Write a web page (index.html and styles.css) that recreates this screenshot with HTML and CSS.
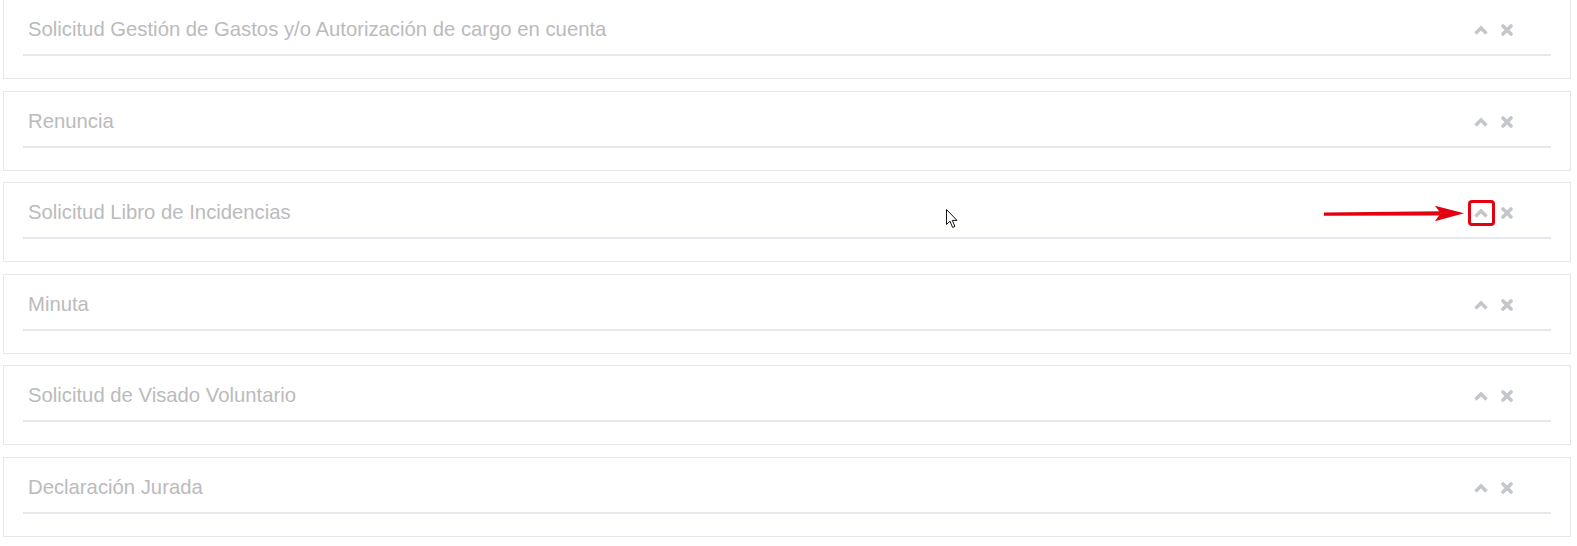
FILE: index.html
```html
<!DOCTYPE html>
<html lang="es">
<head>
<meta charset="utf-8">
<title>Solicitudes</title>
<link rel="stylesheet" href="styles.css">
</head>
<body>
<div class="list">
  <section class="box">
    <div class="box-header">
      <h3 class="box-title">Solicitud Gestión de Gastos y/o Autorización de cargo en cuenta</h3>
      <div class="box-tools">
        <span class="tool"><svg class="ic-up" viewBox="0 0 14 10"><polyline points="1.5,8.5 7,3 12.5,8.5"/></svg></span>
        <span class="tool"><svg class="ic-x" viewBox="0 0 12 12"><path d="M2 2 L10 10 M10 2 L2 10"/></svg></span>
      </div>
    </div>
  </section>
  <section class="box">
    <div class="box-header">
      <h3 class="box-title">Renuncia</h3>
      <div class="box-tools">
        <span class="tool"><svg class="ic-up" viewBox="0 0 14 10"><polyline points="1.5,8.5 7,3 12.5,8.5"/></svg></span>
        <span class="tool"><svg class="ic-x" viewBox="0 0 12 12"><path d="M2 2 L10 10 M10 2 L2 10"/></svg></span>
      </div>
    </div>
  </section>
  <section class="box has-cursor">
    <div class="box-header">
      <h3 class="box-title">Solicitud Libro de Incidencias</h3>
      <div class="box-tools">
        <span class="tool annotated">
          <svg class="ic-up" viewBox="0 0 14 10"><polyline points="1.5,8.5 7,3 12.5,8.5"/></svg>
          <span class="mark-box"></span>
          <svg class="mark-arrow" viewBox="0 0 150 20"><path d="M4 7.4 L124 6.2 L124 10.4 L4 10.8 Z" fill="#e3000f"/><path d="M118 0.5 L148 8.2 L118 16.5 L124 8.3 Z" fill="#e3000f"/></svg>
        </span>
        <span class="tool"><svg class="ic-x" viewBox="0 0 12 12"><path d="M2 2 L10 10 M10 2 L2 10"/></svg></span>
      </div>
    </div>
    <svg class="cursor" viewBox="0 0 14 20"><path d="M0.5 0.5 L0.5 15.5 L4 12.2 L6.6 18.4 L8.9 17.4 L6.3 11.4 L11 11.4 Z" fill="#fff" stroke="#111" stroke-width="1" stroke-linejoin="miter"/></svg>
  </section>
  <section class="box">
    <div class="box-header">
      <h3 class="box-title">Minuta</h3>
      <div class="box-tools">
        <span class="tool"><svg class="ic-up" viewBox="0 0 14 10"><polyline points="1.5,8.5 7,3 12.5,8.5"/></svg></span>
        <span class="tool"><svg class="ic-x" viewBox="0 0 12 12"><path d="M2 2 L10 10 M10 2 L2 10"/></svg></span>
      </div>
    </div>
  </section>
  <section class="box">
    <div class="box-header">
      <h3 class="box-title">Solicitud de Visado Voluntario</h3>
      <div class="box-tools">
        <span class="tool"><svg class="ic-up" viewBox="0 0 14 10"><polyline points="1.5,8.5 7,3 12.5,8.5"/></svg></span>
        <span class="tool"><svg class="ic-x" viewBox="0 0 12 12"><path d="M2 2 L10 10 M10 2 L2 10"/></svg></span>
      </div>
    </div>
  </section>
  <section class="box">
    <div class="box-header">
      <h3 class="box-title">Declaración Jurada</h3>
      <div class="box-tools">
        <span class="tool"><svg class="ic-up" viewBox="0 0 14 10"><polyline points="1.5,8.5 7,3 12.5,8.5"/></svg></span>
        <span class="tool"><svg class="ic-x" viewBox="0 0 12 12"><path d="M2 2 L10 10 M10 2 L2 10"/></svg></span>
      </div>
    </div>
  </section>
</div>
</body>
</html>
```

FILE: styles.css
```css
html, body {
  margin: 0;
  padding: 0;
  background: #ffffff;
  overflow: hidden;
}

body {
  font-family: "Liberation Sans", Arial, sans-serif;
}

.list {
  display: flex;
  flex-direction: column;
  gap: 11.6px;
  padding: 0 6px 0 3px;
  margin-top: -1px;
}

.box {
  position: relative;
  height: 80px;
  box-sizing: border-box;
  border: 1px solid #e6e7ea;
  background: #fff;
  padding: 18px 19px 0 19px;
}

.box-header {
  display: flex;
  align-items: center;
  height: 36px;
  box-sizing: content-box;
  border-bottom: 2px solid #e5e8ec;
  padding-right: 38px;
}

.box-title {
  flex: 1;
  margin: 0 0 14px 0;
  padding-left: 5px;
  font-size: 20.3px;
  font-weight: normal;
  line-height: 22px;
  color: #bbbbbb;
  white-space: nowrap;
}

.box-tools {
  display: flex;
  align-items: center;
  gap: 13px;
  margin-bottom: 12px;
}

.tool {
  position: relative;
  display: flex;
  align-items: center;
  justify-content: center;
}

.ic-up {
  width: 14px;
  height: 10px;
  fill: none;
  stroke: #c3c6ca;
  stroke-width: 3.4;
  stroke-linecap: butt;
  stroke-linejoin: miter;
}

.ic-x {
  width: 12px;
  height: 12px;
  fill: none;
  stroke: #c3c6ca;
  stroke-width: 3.6;
  stroke-linecap: round;
}

.mark-box {
  position: absolute;
  left: -6px;
  top: -8px;
  width: 27px;
  height: 26px;
  box-sizing: border-box;
  border: 3px solid #e3000f;
  border-radius: 4px;
}

.mark-arrow {
  position: absolute;
  left: -154px;
  top: -3px;
  width: 146px;
  height: 20px;
}

.cursor {
  position: absolute;
  left: 942px;
  top: 26px;
  width: 14px;
  height: 20px;
}
```
